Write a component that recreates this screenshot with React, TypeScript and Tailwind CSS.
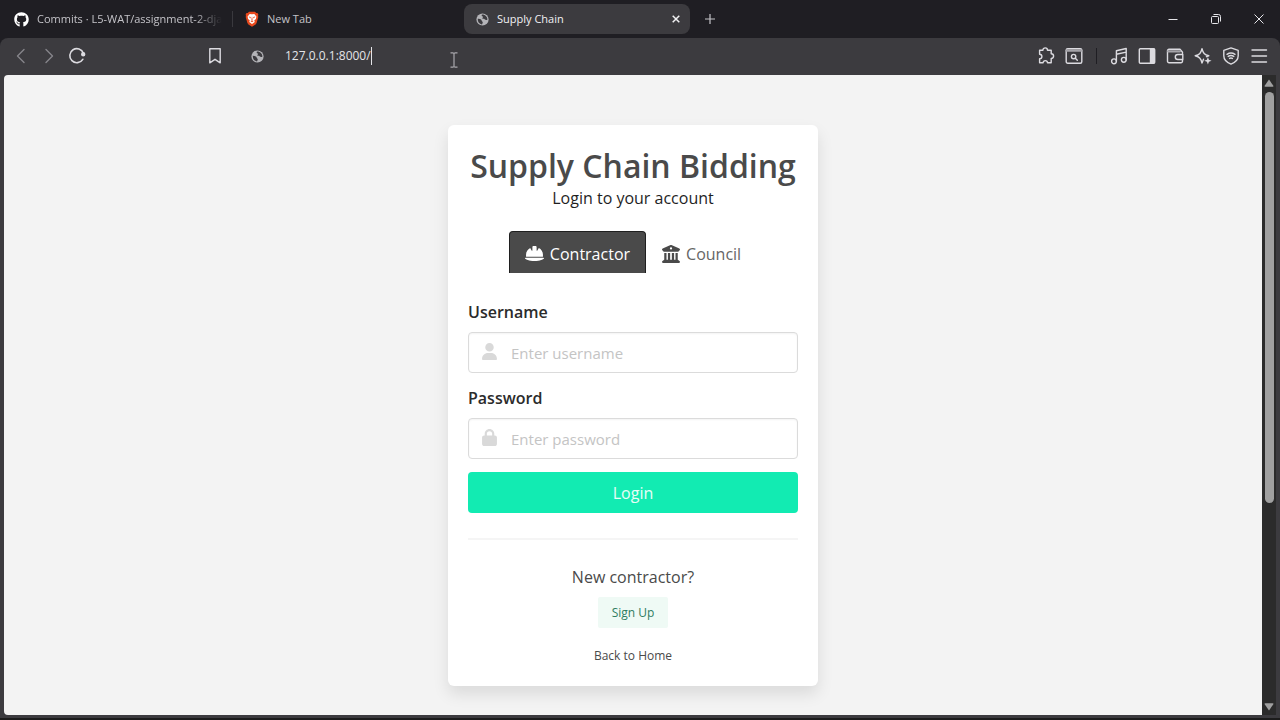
import { useState } from 'react'
import type { ReactNode } from 'react'
import { FaBuildingColumns, FaGithub, FaHelmetSafety, FaLock, FaUser } from 'react-icons/fa6'

function GlobeIcon({ className }: { className: string }) {
  return (
    <svg viewBox="0 0 16 16" className={className} aria-hidden="true">
      <circle cx="8" cy="8" r="7.5" fill="#b4b4b8" />
      <path
        d="M2.2 7.2c1.8 0 3.3.3 4.3 1.2.8.8.2 1.6 1.2 2.1.9.5.7 1.6.2 2.4l-.5 1.2C4.4 13.8 2 11.2 2.2 7.2z"
        fill="#3c3b3f"
      />
      <path
        d="M7.2 2c-.6 1.3.1 2 1 2.2 1 .2.6 1.2-.2 1.6-.9.5.1 1.2 1.2 1.2 1.2 0 1.6.9 2.5 1.3.7.4 1.6.4 2.3.1C14.3 5.2 11.5 1.8 7.2 2z"
        fill="#3c3b3f"
      />
    </svg>
  )
}

function BraveIcon() {
  return (
    <svg viewBox="0 0 14 16" className="h-4 w-3.5" aria-hidden="true">
      <path
        d="M4 .8h6l1.2 1.3 1.3-.1.9 1.7-.4 1.1.3 1.2-1.7 6.1-1 1.3L7 15.7l-3.6-2.3-1-1.3L.7 6l.3-1.2-.4-1.1L1.5 2l1.3.1z"
        fill="#e8491d"
      />
      <path
        d="M7 3.2l2.3-.3 2.1 2.5-.5 2.6-1.7 1.6.6 1.3L7 13.1l-2.8-2.2.6-1.3L3.1 8l-.5-2.6 2.1-2.5z"
        fill="#fff"
      />
      <path
        d="M3.6 5.6l2.2.5-.4 1.3zM10.4 5.6l-2.2.5.4 1.3zM7 5.2l.6 3.3L7 9.5l-.6-1zM5.4 10L7 9.6l1.6.4L7 11.2z"
        fill="#e8491d"
      />
    </svg>
  )
}

function ToolIcon({ children }: { children: ReactNode }) {
  return (
    <svg
      viewBox="0 0 18 18"
      className="size-[18px]"
      fill="none"
      stroke="currentColor"
      strokeWidth="1.4"
      strokeLinecap="round"
      strokeLinejoin="round"
      aria-hidden="true"
    >
      {children}
    </svg>
  )
}

function ToolButton({ label, children, dim = false }: { label: string; children: ReactNode; dim?: boolean }) {
  return (
    <button
      type="button"
      aria-label={label}
      className={`flex size-7 shrink-0 items-center justify-center ${dim ? 'text-[#86858a]' : 'text-[#dcdbe0]'}`}
    >
      {children}
    </button>
  )
}

function WindowButton({ label, children }: { label: string; children: ReactNode }) {
  return (
    <button type="button" aria-label={label} className="flex h-full w-[43px] items-center justify-center text-[#e6e6ea]">
      <svg viewBox="0 0 12 12" className="size-3" fill="none" stroke="currentColor" aria-hidden="true">
        {children}
      </svg>
    </button>
  )
}

function TitleBar() {
  return (
    <header className="flex h-[38px] shrink-0 items-center bg-[#1f1e23] pl-1 text-[11px] text-[#c4c3c8]">
      <div className="flex h-[30px] w-[226px] shrink-0 items-center gap-2 pl-2.5">
        <FaGithub className="size-[15px] shrink-0 text-white" />
        <span className="mask-r-from-85% whitespace-nowrap">Commits · L5-WAT/assignment-2-dja</span>
      </div>
      <div className="mr-px ml-0.5 h-4 w-px bg-[#3a393e]" />
      <div className="flex h-[30px] w-[226px] shrink-0 items-center gap-2 pl-[11px]">
        <BraveIcon />
        <span>New Tab</span>
      </div>
      <div className="ml-1 flex h-[30px] w-[226px] shrink-0 items-center gap-2 rounded-lg bg-[#3c3b3f] pr-1.5 pl-3 text-[#f1f1f3]">
        <GlobeIcon className="size-[13px]" />
        <span className="flex-1">Supply Chain</span>
        <button type="button" aria-label="Close tab" className="p-1">
          <svg viewBox="0 0 8 8" className="size-2" stroke="currentColor" strokeWidth="1.5" aria-hidden="true">
            <path d="M.7.7l6.6 6.6M7.3.7L.7 7.3" />
          </svg>
        </button>
      </div>
      <button type="button" aria-label="New tab" className="p-[15px]">
        <svg viewBox="0 0 10 10" className="size-2.5" stroke="currentColor" strokeWidth="1.2" aria-hidden="true">
          <path d="M5 0v10M0 5h10" />
        </svg>
      </button>
      <div className="ml-auto flex h-full">
        <WindowButton label="Minimize">
          <path d="M1.5 6.5h9" />
        </WindowButton>
        <WindowButton label="Restore">
          <rect x="1.5" y="3.5" width="7" height="7" rx="1" />
          <path d="M3.5 1.5h5a2 2 0 0 1 2 2v5" />
        </WindowButton>
        <WindowButton label="Close">
          <path d="M1.5 1.5l9 9M10.5 1.5l-9 9" />
        </WindowButton>
      </div>
    </header>
  )
}

function Toolbar() {
  const [url, setUrl] = useState('127.0.0.1:8000/')

  return (
    <div className="shrink-0 bg-[#1f1e23]">
      <div className="relative flex h-[37px] items-center rounded-t-lg bg-[#3c3b3f] px-[7px] pb-px">
        <ToolButton label="Back" dim>
          <ToolIcon>
            <path d="M12 2.5L5.5 9l6.5 6.5" />
          </ToolIcon>
        </ToolButton>
        <ToolButton label="Forward" dim>
          <ToolIcon>
            <path d="M6 2.5L12.5 9 6 15.5" />
          </ToolIcon>
        </ToolButton>
        <ToolButton label="Reload">
          <ToolIcon>
            <path d="M14.8 12.3A7 7 0 1 1 15.4 6.3" strokeWidth="1.6" />
            <circle cx="15.2" cy="7.2" r="1.5" fill="currentColor" />
          </ToolIcon>
        </ToolButton>
        <div className="ml-[110px] flex flex-1 items-center">
          <ToolButton label="Bookmark this tab">
            <ToolIcon>
              <path d="M3.8 1.8h10.4v14L9 12.3l-5.2 3.5z" />
            </ToolIcon>
          </ToolButton>
          <div className="flex w-14 items-center justify-center">
            <GlobeIcon className="size-[13px]" />
          </div>
          <input
            aria-label="Address"
            value={url}
            onChange={(e) => setUrl(e.target.value)}
            className="field-sizing-content bg-transparent text-xs text-[#e4e4e8] outline-none"
          />
          <span className="h-[18px] w-px bg-[#e4e4e8]" />
        </div>
        <ToolButton label="Extensions">
          <ToolIcon>
            <path d="M2.6 3.2h3.3a2.3 2.3 0 0 1 4.6 0h3.7v3.5a2.4 2.4 0 0 1 0 4.8v4.3h-3.7a2.2 2.2 0 0 0-4.4 0H2.6v-4a2.3 2.3 0 0 0 0-4.6z" />
          </ToolIcon>
        </ToolButton>
        <ToolButton label="Search tabs">
          <ToolIcon>
            <rect x="1.2" y="1.7" width="15.6" height="14.6" rx="1.5" />
            <path d="M1.8 3.5h14.4" strokeWidth="2.6" stroke="#a5a4a9" />
            <circle cx="8.6" cy="9.6" r="2.2" />
            <path d="M10.3 11.3l2 2" />
          </ToolIcon>
        </ToolButton>
        <div className="mx-2 h-4 w-px bg-[#1f1e23]" />
        <ToolButton label="Playlist">
          <ToolIcon>
            <circle cx="4" cy="14.3" r="2.4" />
            <circle cx="13.8" cy="12.8" r="2.4" />
            <path d="M6.4 14.3V3.7l9.8-2.2v11.3M6.4 7.3l9.8-2.2" />
          </ToolIcon>
        </ToolButton>
        <ToolButton label="Sidebar">
          <ToolIcon>
            <rect x="1.3" y="1.7" width="15.4" height="14.6" rx="1" />
            <path d="M12.5 2.3h3.7v13.4h-3.7z" fill="currentColor" />
          </ToolIcon>
        </ToolButton>
        <ToolButton label="Wallet">
          <ToolIcon>
            <path d="M16.5 6.5V5.2L14 2.3H3a1.5 1.5 0 0 0-1.5 1.5v10.4A1.5 1.5 0 0 0 3 15.7h12a1.5 1.5 0 0 0 1.5-1.5V13" />
            <path d="M2 4.3h12" strokeWidth="2.2" stroke="#a5a4a9" />
            <path d="M16.8 7.5h-5a2.4 2.4 0 0 0 0 5h5z" />
          </ToolIcon>
        </ToolButton>
        <ToolButton label="Leo AI">
          <ToolIcon>
            <path d="M9.5 12.2L8 16c-1-4.4-2.4-6-6.8-7.2C5.6 7.6 7 6 8 1.6c1 4.4 2.4 6 6.8 7.2l-2.3.9" />
            <path d="M13.9 10l1 2.7 2.7 1-2.7 1-1 2.7-1-2.7-2.7-1 2.7-1z" fill="currentColor" stroke="none" />
          </ToolIcon>
        </ToolButton>
        <ToolButton label="VPN">
          <ToolIcon>
            <path d="M9 .9l7.2 2.5v5.4c0 4-3 6.7-7.2 8.3-4.2-1.6-7.2-4.3-7.2-8.3V3.4z" />
            <path d="M5 7.3c2.5-1.7 5.5-1.7 8 0M6.2 9.4c1.8-1.2 3.8-1.2 5.6 0M7.6 11.4c1-.6 1.8-.6 2.8 0" />
          </ToolIcon>
        </ToolButton>
        <ToolButton label="Menu">
          <ToolIcon>
            <path d="M2 3h14.5M2 9h14.5M2 15h14.5" />
          </ToolIcon>
        </ToolButton>
        <svg
          viewBox="0 0 8 16"
          className="absolute top-3.5 left-[450px] h-4 w-2"
          fill="none"
          stroke="#a9a8ad"
          strokeWidth="1.2"
          aria-hidden="true"
        >
          <path d="M.5.8H3l1 .8 1-.8h2.5M.5 15.2H3l1-.8 1 .8h2.5M4 1.6v12.8" />
        </svg>
      </div>
    </div>
  )
}

function Field({
  id,
  label,
  type,
  placeholder,
  icon,
}: {
  id: string
  label: string
  type: string
  placeholder: string
  icon: ReactNode
}) {
  return (
    <div>
      <label htmlFor={id} className="mb-2 block text-base leading-6 font-semibold text-[#2b2b2b]">
        {label}
      </label>
      <div className="flex h-[41px] items-center rounded border border-[#dbdbdb] bg-white text-[#d9d9d9] shadow-[inset_0_1px_2px_rgba(10,10,10,0.05)]">
        <span className="flex w-[42px] justify-center pr-0.5 pb-0.5">{icon}</span>
        <input
          id={id}
          type={type}
          placeholder={placeholder}
          className="h-full min-w-0 flex-1 text-[15px] text-[#363636] outline-none placeholder:text-[#c4c4c4]"
        />
      </div>
    </div>
  )
}

function LoginCard() {
  const [role, setRole] = useState<'contractor' | 'council'>('contractor')
  const active = 'rounded-t border border-b-0 border-[#1f1f1f] bg-[#4a4a4a] text-white'
  const inactive = 'border border-b-0 border-transparent text-[#666]'

  return (
    <section className="w-[370px] rounded-md bg-white px-5 pt-[21px] pb-[18px] text-center shadow-[0_8px_16px_rgba(10,10,10,0.1)]">
      <h1 className="text-[32px] leading-10 font-semibold whitespace-nowrap text-[#4a4a4a]">Supply Chain Bidding</h1>
      <p className="text-base leading-6 text-[#1f1f1f]">Login to your account</p>
      <div role="tablist" className="mt-[21px] flex justify-center">
        <button
          type="button"
          role="tab"
          aria-selected={role === 'contractor'}
          onClick={() => setRole('contractor')}
          className={`flex h-[42px] items-center gap-1.5 px-[15px] pt-0.5 text-base ${role === 'contractor' ? active : inactive}`}
        >
          <FaHelmetSafety className="size-[19px]" />
          Contractor
        </button>
        <button
          type="button"
          role="tab"
          aria-selected={role === 'council'}
          onClick={() => setRole('council')}
          className={`flex h-[42px] items-center gap-1.5 px-[15px] pt-0.5 text-base ${role === 'council' ? active : inactive}`}
        >
          <FaBuildingColumns className="size-[18px] text-[#4a4a4a]" />
          Council
        </button>
      </div>
      <form onSubmit={(e) => e.preventDefault()} className="mt-[27px] flex flex-col gap-[13px] text-left">
        <Field
          id="username"
          label="Username"
          type="text"
          placeholder="Enter username"
          icon={<FaUser className="size-[17px]" />}
        />
        <Field
          id="password"
          label="Password"
          type="password"
          placeholder="Enter password"
          icon={<FaLock className="size-[17px]" />}
        />
        <button type="submit" className="h-[41px] rounded bg-[#12ebb2] text-base text-white/90">
          Login
        </button>
      </form>
      <hr className="my-[25px] border-t-2 border-[#f5f5f5]" />
      <p className="text-base leading-6 text-[#4a4a4a]">New contractor?</p>
      <a
        href="#signup"
        className="mx-auto mt-2 flex h-[31px] w-[70px] items-center justify-center rounded-xs bg-[#effaf5] text-xs text-[#2f7d62]"
      >
        Sign Up
      </a>
      <a href="#home" className="mt-4 inline-block text-xs leading-6 text-[#4a4a4a]">
        Back to Home
      </a>
    </section>
  )
}

function ScrollBar() {
  return (
    <div className="flex w-3.5 shrink-0 flex-col items-center bg-[#2b2b2b] py-1 text-[#a0a0a0]" aria-hidden="true">
      <svg viewBox="0 0 10 8" className="h-2 w-2.5" fill="currentColor">
        <path d="M5 .5L9.5 7q0 .8-.8.8H1.3Q.5 7.8.5 7z" />
      </svg>
      <div className="mt-[5px] mb-[200px] w-[9px] flex-1 rounded-full bg-[#a0a0a0]" />
      <svg viewBox="0 0 10 8" className="h-2 w-2.5" fill="currentColor">
        <path d="M5 7.5L9.5 1q0-.8-.8-.8H1.3Q.5.2.5 1z" />
      </svg>
    </div>
  )
}

export default function App() {
  return (
    <div className="flex h-screen flex-col overflow-hidden border-b-2 border-[#1c1c1c] bg-[#3c3b3f] font-['Open_Sans','Noto_Sans',sans-serif]">
      <TitleBar />
      <Toolbar />
      <div className="flex min-h-0 flex-1 px-1 pb-[3px]">
        <main className="flex flex-1 items-start justify-center overflow-hidden rounded-l-sm bg-[#f3f3f3] pt-[50px]">
          <LoginCard />
        </main>
        <ScrollBar />
      </div>
    </div>
  )
}
